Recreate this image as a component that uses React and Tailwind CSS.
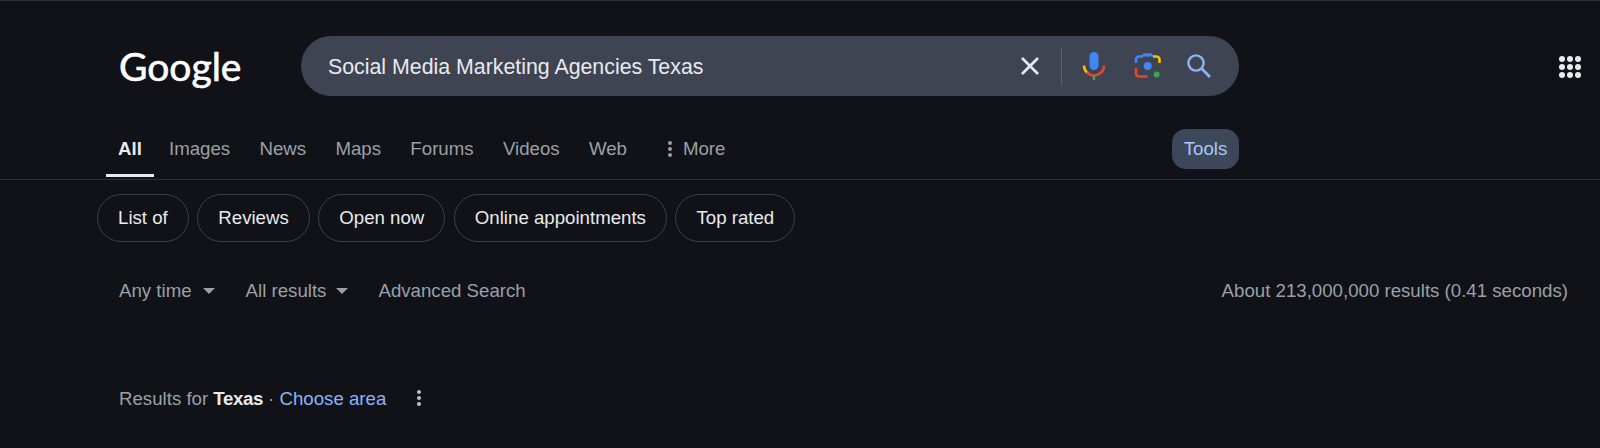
const font = "font-['Liberation_Sans',Arial,sans-serif]";

function MicIcon() {
    return (
        <svg width="24" height="30" viewBox="0 0 24 30" fill="none">
            <rect x="7.5" y="1" width="9" height="18" rx="4.5" fill="#4285f4" />
            <path d="M2 14.5 A10 10 0 0 0 5 21.5" stroke="#fbbc04" strokeWidth="2.6" />
            <path d="M5 21.5 A10 10 0 0 0 22 14.5" stroke="#ea4335" strokeWidth="2.6" />
            <rect x="10.7" y="24" width="2.6" height="5" fill="#34a853" />
        </svg>
    );
}

function LensIcon() {
    return (
        <svg width="28" height="28" viewBox="0 0 28 28" fill="none">
            <path d="M2 11 V7.5 A3 3 0 0 1 5 4.5 H9" stroke="#4285f4" strokeWidth="2.6" />
            <path d="M8 4.5 L10 2 H17 L19.5 4.5" fill="#4285f4" stroke="#4285f4" strokeWidth="1.5" />
            <path d="M19 4.5 H22.5 A3 3 0 0 1 25.5 7.5 V11" stroke="#fbbc04" strokeWidth="2.6" />
            <path d="M2 16 V21 A3 3 0 0 0 5 24.5 H13.5" stroke="#ea4335" strokeWidth="2.6" />
            <circle cx="13.7" cy="14" r="4" fill="#4285f4" />
            <circle cx="22.7" cy="22.5" r="3" fill="#34a853" />
        </svg>
    );
}

function SearchIcon() {
    return (
        <svg width="26" height="26" viewBox="0 0 26 26" fill="none" stroke="#8ab4f8" strokeWidth="2.4">
            <circle cx="10" cy="10" r="7.6" />
            <path d="M15.6 15.6 L24 24" strokeWidth="2.8" />
        </svg>
    );
}

function CloseIcon() {
    return (
        <svg width="20" height="20" viewBox="0 0 20 20" stroke="#e8eaed" strokeWidth="2.6">
            <path d="M2 2 L18 18 M18 2 L2 18" />
        </svg>
    );
}

function Dots({ className }) {
    return (
        <span className={`flex flex-col gap-[2px] ${className}`}>
            <span className="w-[4px] h-[4px] rounded-full bg-current" />
            <span className="w-[4px] h-[4px] rounded-full bg-current" />
            <span className="w-[4px] h-[4px] rounded-full bg-current" />
        </span>
    );
}

function Caret({ className }) {
    return <span className={`w-0 h-0 border-x-[6.5px] border-x-transparent border-t-[6px] border-t-[#9aa0a6] ${className}`} />;
}

export default function App() {
    const tabs = ['Images', 'News', 'Maps', 'Forums', 'Videos', 'Web'];
    const chips = ['List of', 'Reviews', 'Open now', 'Online appointments', 'Top rated'];

    return (
        <div className={`${font} w-full h-[448px] overflow-hidden bg-[#101218] border-t border-[#2c2e33] text-[#9aa0a6]`}>

            {/* Top bar */}
            <div className="flex items-center h-[95px] pt-[35px] pl-[119px] pr-[19px]">
                <span className="w-[182px] font-['Lato',sans-serif] text-[39px] leading-none text-white [-webkit-text-stroke:0.6px_white]">Google</span>
                <div className="flex items-center w-[938px] h-[60px] rounded-[30px] bg-[#3f4453] pl-[27px]">
                    <span className="flex-1 mt-[3px] text-[21.33px] text-[#e8eaed]">Social Media Marketing Agencies Texas</span>
                    <CloseIcon />
                    <span className="w-px h-[37px] bg-[#5f6368] ml-[21px] mr-[20px]" />
                    <MicIcon />
                    <span className="ml-[28px]"><LensIcon /></span>
                    <span className="ml-[24px] mr-[27px]"><SearchIcon /></span>
                </div>
                <div className="ml-auto mt-[1px] grid grid-cols-3 gap-[2px]">
                    {[...Array(9)].map((_, i) => (
                        <span key={i} className="w-[6px] h-[6px] rounded-full bg-[#e8eaed]" />
                    ))}
                </div>
            </div>

            {/* Tabs */}
            <div className="flex items-stretch h-[84px] pl-[106px] pr-[361px] border-b border-[#2c2e33] text-[18.67px] leading-[28px]">
                <div className="flex flex-col justify-end items-center w-[48px] mr-[15px]">
                    <span className="font-bold text-[#e8eaed] mb-[11px]">All</span>
                    <span className="w-full h-[3px] mb-[2px] bg-[#e8eaed]" />
                </div>
                <div className="flex items-end gap-[29.3px] pb-[16px]">
                    {tabs.map(t => <span key={t}>{t}</span>)}
                </div>
                <div className="flex items-end gap-[11px] pb-[16px] ml-[41px]">
                    <Dots className="mb-[6px]" />
                    <span>More</span>
                </div>
                <div className="flex items-end pb-[10px] ml-auto">
                    <span className="flex items-center justify-center w-[67px] h-[40px] rounded-[14px] bg-[#3c4759] text-[#a8c7fa]">Tools</span>
                </div>
            </div>

            {/* Chips */}
            <div className="flex gap-[8.5px] pl-[97px] pt-[14px]">
                {chips.map(c => (
                    <span key={c} className="flex items-center h-[48px] px-[20px] rounded-full border border-[#3c4043] text-[18.67px] text-[#e8eaed]">{c}</span>
                ))}
            </div>

            {/* Filters and result count */}
            <div className="flex items-center pl-[119px] pr-[32px] pt-[35px] text-[18.67px] leading-[28px]">
                <span>Any time</span>
                <Caret className="ml-[11px]" />
                <span className="ml-[31px]">All results</span>
                <Caret className="ml-[10px]" />
                <span className="ml-[30px]">Advanced Search</span>
                <span className="ml-auto">About 213,000,000 results (0.41 seconds)</span>
            </div>

            {/* Location line */}
            <div className="flex items-center pl-[119px] pt-[80px] text-[18.67px] leading-[28px]">
                <span>Results for <b className="tracking-[-0.4px] text-[#e8eaed]">Texas</b> · <span className="text-[#8ab4f8]">Choose area</span></span>
                <Dots className="ml-[31px] mb-[3px] text-[#bdc1c6]" />
            </div>
        </div>
    );
}
